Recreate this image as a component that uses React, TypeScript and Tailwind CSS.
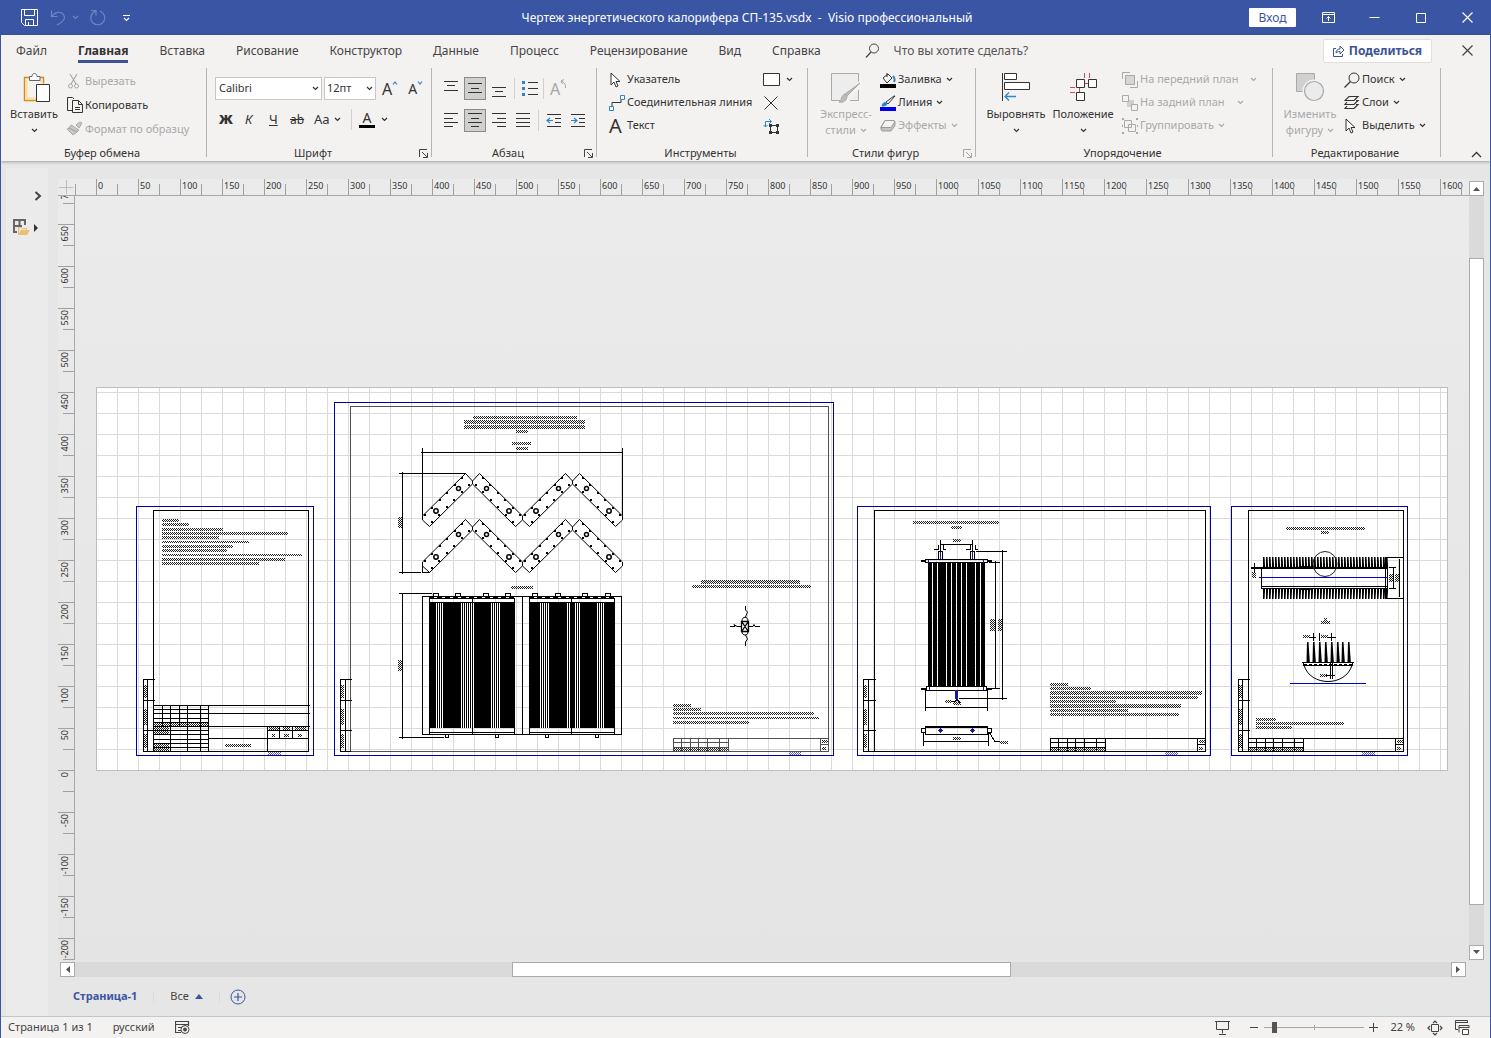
import { useState } from "react";
import type { ReactNode } from "react";

const tabs = [
  "Файл",
  "Главная",
  "Вставка",
  "Рисование",
  "Конструктор",
  "Данные",
  "Процесс",
  "Рецензирование",
  "Вид",
  "Справка",
];

const horizontalMarks = Array.from({ length: 33 }, (_, i) => i * 50);
const verticalMarks = Array.from({ length: 19 }, (_, i) => 700 - i * 50);

type SvgProps = { w: number; h: number; children: ReactNode; className?: string };

function Svg({ w, h, children, className = "" }: SvgProps) {
  return (
    <svg
      width={w}
      height={h}
      viewBox={`0 0 ${w} ${h}`}
      fill="none"
      stroke="currentColor"
      className={`shrink-0 ${className}`}
      aria-hidden="true"
    >
      {children}
    </svg>
  );
}

function Chevron({ className = "" }: { className?: string }) {
  return (
    <Svg w={7} h={5} className={className}>
      <path d="M1 1l2.5 2.5L6 1" strokeWidth="1.2" />
    </Svg>
  );
}

function Group({
  label,
  width,
  launcher,
  dim,
  children,
}: {
  label: string;
  width: string;
  launcher?: boolean;
  dim?: boolean;
  children: ReactNode;
}) {
  return (
    <section className={`flex flex-col shrink-0 h-[89px] border-r border-[#b5b5b5] ${width}`}>
      <div className="flex flex-1">{children}</div>
      <div className="flex items-center h-2 pr-[3px]">
        <span className="flex-1 text-center">{label}</span>
        {launcher && (
          <button aria-label={`${label}: параметры`} className={dim ? "text-[#a6a6a6]" : "text-[#444]"}>
            <Svg w={9} h={9}>
              <path d="M.5 8V.5H8M3 3l5 5M8.500 4v4.500H4" />
            </Svg>
          </button>
        )}
      </div>
    </section>
  );
}

function Row({
  icon,
  text,
  arrow,
  wide,
  disabled,
  tall,
}: {
  icon: ReactNode;
  text: string;
  arrow?: boolean;
  wide?: boolean;
  disabled?: boolean;
  tall?: boolean;
}) {
  return (
    <button
      disabled={disabled}
      className={`flex items-center whitespace-nowrap ${tall ? "h-6" : "h-[23px]"} ${
        disabled ? "text-[#a9a9a9]" : "text-[#333]"
      }`}
    >
      <span className="w-[18px] flex items-center">{icon}</span>
      {text}
      {arrow && <Chevron className={wide ? "ml-3" : "ml-1"} />}
    </button>
  );
}

function BigButton({
  icon,
  lines,
  disabled,
  width,
}: {
  icon: ReactNode;
  lines: string[];
  disabled?: boolean;
  width: string;
}) {
  return (
    <button
      disabled={disabled}
      className={`flex flex-col items-center shrink-0 pt-1 leading-4 ${width} ${
        disabled ? "text-[#a9a9a9]" : "text-[#333]"
      }`}
    >
      <span className="h-[34px]">{icon}</span>
      <span>{lines[0]}</span>
      <span className="flex items-center h-4 gap-1">
        {lines[1]}
        <Chevron />
      </span>
    </button>
  );
}

function AlignIcon({ d }: { d: string }) {
  return (
    <Svg w={16} h={16}>
      <path d={d} stroke="#333" shapeRendering="crispEdges" />
    </Svg>
  );
}

function ToolButton({
  label,
  active,
  children,
}: {
  label: string;
  active?: boolean;
  children: ReactNode;
}) {
  return (
    <button
      aria-label={label}
      aria-pressed={active}
      className={`w-[22px] h-[23px] flex items-center justify-center shrink-0 ${
        active ? "bg-[#d0d0ce] border border-[#8a8a8a]" : ""
      }`}
    >
      {children}
    </button>
  );
}

function Divider({ className = "" }: { className?: string }) {
  return <span className={`w-px h-[21px] bg-[#d2d0ce] shrink-0 ${className}`} />;
}

function Pointer() {
  return (
    <Svg w={13} h={16}>
      <path d="M2 1v12l3-3 2 5 2-1-2-4.500h4z" fill="#fff" stroke="#333" />
    </Svg>
  );
}

/* ---------- title bar ---------- */

function TitleBar() {
  return (
    <header className="flex items-center h-[35px] bg-[#3955a3] text-white shrink-0">
      <div className="flex items-center flex-1 pl-5">
        <button aria-label="Сохранить">
          <Svg w={17} h={17}>
            <path d="M.5.5h16v16h-13l-3-3zM3.500.5v6h10v-6M4.500 16.500v-6h8v6M7.500 13v3.500" />
          </Svg>
        </button>
        <button aria-label="Отменить" className="flex items-center ml-3 text-[#6f86c6]">
          <Svg w={17} h={17}>
            <path d="M1.500 1.500v6h6M2 7c3-4 8-5 11-2 4 5-1 8-6 11" strokeWidth="1.200" />
          </Svg>
          <Chevron className="ml-[5px]" />
        </button>
        <button aria-label="Вернуть" className="ml-[10px] text-[#6f86c6]">
          <Svg w={18} h={17}>
            <path d="M2 1.500h5v5M6.500 2C2 4 0 10 4 14c4 3 9 2 11-2 2-4 0-8-4-10" strokeWidth="1.200" />
          </Svg>
        </button>
        <button aria-label="Настройка панели" className="ml-[15px]">
          <Svg w={9} h={8}>
            <path d="M1 1.500h7M2 4l2.500 2.500L7 4" strokeWidth="1.200" />
          </Svg>
        </button>
      </div>
      <h1 className="whitespace-pre">
        Чертеж энергетического калорифера СП-135.vsdx  -  Visio профессиональный
      </h1>
      <div className="flex items-center justify-end flex-1 pr-[17px]">
        <button className="w-[47px] h-[19px] mr-[26px] bg-white text-[#3955a3] rounded-[1px]">Вход</button>
        <button aria-label="Параметры ленты" className="mr-[34px]">
          <Svg w={13} h={11}>
            <path d="M.5.5h12v10H.5zM.5 2.500h12M6.500 9V4.500M4.500 6.500l2-2 2 2" />
          </Svg>
        </button>
        <button aria-label="Свернуть" className="mr-[36px]">
          <Svg w={11} h={11}>
            <path d="M.5 5.500h10" />
          </Svg>
        </button>
        <button aria-label="Развернуть" className="mr-[36px]">
          <Svg w={10} h={10}>
            <path d="M.5.5h9v9h-9z" />
          </Svg>
        </button>
        <button aria-label="Закрыть">
          <Svg w={11} h={11}>
            <path d="M.5.5l10 10M10.500.5l-10 10" strokeWidth="1.200" />
          </Svg>
        </button>
      </div>
    </header>
  );
}

/* ---------- ribbon ---------- */

function TabRow() {
  const [active, setActive] = useState("Главная");
  return (
    <nav className="flex items-center h-[31px] pl-[15px] pr-[17px] text-[#444]">
      <div className="flex gap-[31px]">
        {tabs.map((tab) => (
          <button
            key={tab}
            onClick={() => setActive(tab)}
            className={`h-[25px] pt-[3px] border-b-[3px] ${
              tab === active ? "font-bold border-[#3b5393] text-[#333]" : "border-transparent"
            }`}
          >
            {tab}
          </button>
        ))}
      </div>
      <label className="flex items-center flex-1 ml-11">
        <Svg w={15} h={15}>
          <circle cx="9" cy="5.500" r="4.500" />
          <path d="M6 9l-5 5.500" strokeWidth="1.200" />
        </Svg>
        <input
          placeholder="Что вы хотите сделать?"
          aria-label="Поиск команд"
          className="flex-1 ml-[14px] outline-none placeholder:text-[#555]"
        />
      </label>
      <button className="flex items-center justify-center w-[109px] h-6 gap-1 bg-white border border-[#e1dfdd] rounded-[2px] font-bold text-[#3b5393]">
        <Svg w={12} h={12}>
          <path d="M3 3.500H.5v8h9V9M3 8c0-3 2-4 4-4V1l4 4-4 4V6.500C5 6.500 4 7 3 8z" />
        </Svg>
        Поделиться
      </button>
      <button aria-label="Закрыть документ" className="ml-[30px]">
        <Svg w={11} h={11}>
          <path d="M.5.5l10 10M10.500.5l-10 10" strokeWidth="1.200" />
        </Svg>
      </button>
    </nav>
  );
}

function ClipboardGroup() {
  return (
    <Group label="Буфер обмена" width="w-[206px]">
      <BigButton
        width="w-[66px]"
        lines={["Вставить"]}
        icon={
          <Svg w={32} h={32} className="ml-[6px]">
            <path d="M9 5.500H3.500v23h13M18 5.500h4.500v6" stroke="#d8891c" strokeWidth="1.400" />
            <path d="M5.500 8v18.500h11M20.500 8v3" stroke="#fbdca0" strokeWidth="2" />
            <path d="M8.500 8.500V4.500H11c0-4 5-4 5 0h3v4z" fill="#fff" stroke="#666" />
            <path d="M15.500 12.500h13v17h-13z" fill="#fff" stroke="#333" />
          </Svg>
        }
      />
      <div className="pt-px">
        <Row
          tall
          disabled
          text="Вырезать"
          icon={
            <Svg w={14} h={16}>
              <path d="M3 1l6 10M10 1L4 11" strokeWidth="1.200" />
              <circle cx="3.500" cy="13" r="2" />
              <circle cx="9.500" cy="13" r="2" />
            </Svg>
          }
        />
        <Row
          tall
          text="Копировать"
          icon={
            <Svg w={16} h={16}>
              <path d="M5 13.500H.5V.5h5L7 2M5.500 3.500h6l4 4v8h-10zM11.500 3.500v4h4M8 10.500h5M8 12.500h5" />
            </Svg>
          }
        />
        <Row
          tall
          disabled
          text="Формат по образцу"
          icon={
            <Svg w={16} h={16}>
              <path d="M9 4l4-3 2 1-3 5zM4 4l8 5-2 2-8-4zM2 7l-2 1 6 6 4-3z" fill="#c8c8c8" />
            </Svg>
          }
        />
      </div>
    </Group>
  );
}

function FontGroup() {
  return (
    <Group label="Шрифт" width="w-[225px]" launcher>
      <div className="flex flex-col pl-2 pt-[9px] gap-[9px]">
        <div className="flex items-center gap-[2px]">
          <div className="relative flex items-center">
            <select
              aria-label="Шрифт текста"
              className="w-[107px] h-[23px] pl-[3px] appearance-none bg-white border border-[#c8c6c4]"
            >
              <option>Calibri</option>
            </select>
            <Chevron className="absolute right-[3px] pointer-events-none" />
          </div>
          <div className="relative flex items-center">
            <select
              aria-label="Размер шрифта"
              className="w-[52px] h-[23px] pl-[2px] appearance-none bg-white border border-[#c8c6c4]"
            >
              <option>12пт</option>
            </select>
            <Chevron className="absolute right-[3px] pointer-events-none" />
          </div>
          <button aria-label="Увеличить размер" className="flex items-start ml-1 text-base leading-4">
            A
            <Svg w={6} h={4} className="text-[#2a86b8]">
              <path d="M1 3.500L3 1l2 2.500" strokeWidth="1.200" />
            </Svg>
          </button>
          <button aria-label="Уменьшить размер" className="flex items-start ml-2 text-sm leading-4">
            A
            <Svg w={6} h={4} className="text-[#2a86b8]">
              <path d="M1 .5L3 3 5 .5" strokeWidth="1.200" />
            </Svg>
          </button>
        </div>
        <div className="flex items-center h-[21px] text-[13px] pl-1">
          <button className="w-[26px] text-left font-black">Ж</button>
          <button className="w-6 text-left italic">К</button>
          <button className="w-[21px] text-left underline">Ч</button>
          <button className="w-6 text-left line-through text-xs">ab</button>
          <button className="flex items-center w-[37px] gap-1">
            Aa
            <Chevron />
          </button>
          <Divider />
          <button aria-label="Цвет текста" className="flex items-center ml-[7px] gap-[6px]">
            <span className="w-4 h-4 text-sm leading-[12px] border-b-[3px] border-black">A</span>
            <Chevron />
          </button>
        </div>
      </div>
    </Group>
  );
}

function ParagraphGroup() {
  return (
    <Group label="Абзац" width="w-[165px]" launcher>
      <div className="flex flex-col pl-[8px] pt-[9px] gap-[9px]">
        <div className="flex items-center gap-[2px]">
          <ToolButton label="По верхнему краю">
            <AlignIcon d="M1 .5h14M4 4.500h8M1 9.500h14" />
          </ToolButton>
          <ToolButton label="По середине" active>
            <AlignIcon d="M1 2.500h14M4 7.500h8M1 11.500h14" />
          </ToolButton>
          <ToolButton label="По нижнему краю">
            <AlignIcon d="M1 6.500h14M4 10.500h8M1 15.500h14" />
          </ToolButton>
          <Divider className="mx-[2px]" />
          <ToolButton label="Маркеры">
            <Svg w={16} h={16}>
              <path d="M6 1.500h10M6 7.500h10M6 13.500h10" stroke="#333" />
              <path d="M0 1.500h3M0 7.500h3M0 13.500h3" stroke="#2a86c8" strokeWidth="3" />
            </Svg>
          </ToolButton>
          <Divider />
          <button aria-label="Повернуть текст" className="flex items-start ml-1 text-base leading-5 text-[#a6a6a6]">
            A
            <Svg w={7} h={10}>
              <path d="M5.500 9C6 5 4 3 1 2M4 .5L1 2l1.500 3" />
            </Svg>
          </button>
        </div>
        <div className="flex items-center gap-[2px]">
          <ToolButton label="По левому краю">
            <AlignIcon d="M1 .5h14M1 5.500h9M1 9.500h14M1 13.500h9" />
          </ToolButton>
          <ToolButton label="По центру" active>
            <AlignIcon d="M1 .5h14M4 5.500h8M1 9.500h14M4 13.500h8" />
          </ToolButton>
          <ToolButton label="По правому краю">
            <AlignIcon d="M1 .5h14M6 5.500h9M1 9.500h14M6 13.500h9" />
          </ToolButton>
          <ToolButton label="По ширине">
            <AlignIcon d="M1 .5h14M1 5.500h14M1 9.500h14M1 13.500h14" />
          </ToolButton>
          <Divider className="mx-[2px]" />
          <ToolButton label="Уменьшить отступ">
            <Svg w={16} h={16}>
              <path d="M1 1.500h14M9 5.500h6M9 9.500h6M1 13.500h14" stroke="#333" />
              <path d="M7 7.500H1M4 5L1 7.500 4 10" stroke="#2a86c8" strokeWidth="1.200" />
            </Svg>
          </ToolButton>
          <ToolButton label="Увеличить отступ">
            <Svg w={16} h={16}>
              <path d="M1 1.500h14M9 5.500h6M9 9.500h6M1 13.500h14" stroke="#333" />
              <path d="M1 7.500h6M4 5l3 2.500L4 10" stroke="#2a86c8" strokeWidth="1.200" />
            </Svg>
          </ToolButton>
        </div>
      </div>
    </Group>
  );
}

function ToolsGroup() {
  return (
    <Group label="Инструменты" width="w-[211px]">
      <div className="flex justify-between w-full pl-3 pr-[13px]">
        <div>
          <Row text="Указатель" icon={<Pointer />} />
          <Row
            text="Соединительная линия"
            icon={
              <Svg w={16} h={16}>
                <path d="M3 11V7.500h9V5" stroke="#333" />
                <path d="M.5 11.500h4v4h-4zM11.500.5h4v4h-4z" fill="#fff" stroke="#2a86c8" />
              </Svg>
            }
          />
          <Row text="Текст" icon={<span className="text-xl leading-5 text-[#333]">A</span>} />
        </div>
        <div className="w-[31px]">
          <button aria-label="Прямоугольник" className="flex items-center h-[23px] gap-[6px]">
            <Svg w={17} h={13}>
              <path d="M.5.5h16v12H.5z" fill="#fff" stroke="#333" />
            </Svg>
            <Chevron />
          </button>
          <button aria-label="Точка соединения" className="flex items-center h-[23px] pl-px">
            <Svg w={14} h={14}>
              <path d="M.5.5l13 13M13.500.5l-13 13" stroke="#333" />
            </Svg>
          </button>
          <button aria-label="Текстовый блок" className="flex items-center h-[23px]">
            <Svg w={17} h={16}>
              <path d="M2.500 9V3.500H8M.5 7l2 2 2-2M6 1l2.500 2.500L6 6" stroke="#2a86c8" />
              <path d="M7.500 7.500h7v7h-7z" stroke="#333" />
              <path d="M6 7.500h3M13 7.500h3M6 14.500h3M13 14.500h3" stroke="#333" strokeWidth="3" />
            </Svg>
          </button>
        </div>
      </div>
    </Group>
  );
}

function StylesGroup() {
  return (
    <Group label="Стили фигур" width="w-[168px]" launcher dim>
      <BigButton
        disabled
        width="w-[72px] pl-1"
        lines={["Экспресс-", "стили"]}
        icon={
          <Svg w={32} h={32}>
            <path d="M10 28.500H1.500v-27h27v8M28.500 18v10.500H20" fill="#ededed" />
            <path d="M30 11L17 24l-2-2zM17 24c0 5-4 7-8 6 2-1 2-3 3-5 1-2 2-3 3-3z" fill="#bbb" />
          </Svg>
        }
      />
      <div>
        <Row
          arrow
          text="Заливка"
          icon={
            <Svg w={16} h={16}>
              <path d="M3 6l5-4 4 4-5 5zM7 1v4" stroke="#333" />
              <path d="M13 4c2 2 2 4 1 6" stroke="#2a86c8" strokeWidth="2" />
              <path d="M0 14h16" stroke="#000" strokeWidth="4" />
            </Svg>
          }
        />
        <Row
          arrow
          text="Линия"
          icon={
            <Svg w={16} h={16}>
              <path d="M15 1L8 9 6 7l8-6z" fill="#fff" stroke="#333" />
              <path d="M2 11c1-4 3-4 5-3 0 3-3 3-5 3z" fill="#2a86c8" stroke="#2a86c8" />
              <path d="M0 14h16" stroke="#0000f0" strokeWidth="4" />
            </Svg>
          }
        />
        <Row
          arrow
          disabled
          text="Эффекты"
          icon={
            <Svg w={16} h={16}>
              <path d="M5 2.500h8q2 0 2 2v3l-4 5.500H3q-2 0-2-2V9z" fill="#c4c4c4" stroke="#999" />
              <path d="M5 2.500h8l2 1-4 6H1z" fill="#f2f2f2" stroke="#999" />
            </Svg>
          }
        />
      </div>
    </Group>
  );
}

function ArrangeGroup() {
  return (
    <Group label="Упорядочение" width="w-[297px]">
      <BigButton
        width="w-[74px] pl-[6px]"
        lines={["Выровнять"]}
        icon={
          <Svg w={30} h={30} className="text-[#333]">
            <path d="M1.500 1v28" />
            <path d="M3.500 1.500h12v6h-12zM3.500 10.500h25v7h-25z" fill="#fff" />
            <path d="M15 24.500H4M8 20.500l-4 4 4 4" stroke="#2a86c8" strokeWidth="1.300" />
          </Svg>
        }
      />
      <BigButton
        width="w-[66px]"
        lines={["Положение"]}
        icon={
          <Svg w={30} h={30} className="text-[#333]">
            <path d="M16.500 1v5M21.500 1v5M2 15.500h5M2 20.500h5M16.500 11.500h5M11.500 16v5" stroke="#d64550" />
            <path d="M8.500 7.500h8v8h-8zM20.500 7.500h8v8h-8zM8.500 20.500h8v8h-8z" fill="#fff" />
          </Svg>
        }
      />
      <div className="pl-[6px]">
        <Row
          arrow
          wide
          disabled
          text="На передний план"
          icon={
            <Svg w={16} h={16}>
              <path d="M.5 7V.5H8M8 15.500h7.500V9" />
              <path d="M3.500 3.500h9v9h-9z" fill="#d6d6d6" />
            </Svg>
          }
        />
        <Row
          arrow
          wide
          disabled
          text="На задний план"
          icon={
            <Svg w={16} h={16}>
              <path d="M5 5h7v7H5z" fill="#d0d0d0" stroke="none" />
              <path d="M.5.5h6v6h-6zM9.500 9.500h6v6h-6z" fill="#f3f2f1" />
            </Svg>
          }
        />
        <Row
          arrow
          disabled
          text="Группировать"
          icon={
            <Svg w={16} h={16}>
              <path d="M2.500 2.500h7v7h-7zM6.500 6.500h7v7h-7z" />
              <path d="M0 1h2M14 1h2M0 15h2M14 15h2M0 8h1M15 8h1" strokeWidth="2" />
            </Svg>
          }
        />
      </div>
    </Group>
  );
}

function EditGroup() {
  return (
    <Group label="Редактирование" width="w-[168px]">
      <BigButton
        disabled
        width="w-[71px] pl-[3px]"
        lines={["Изменить", "фигуру"]}
        icon={
          <Svg w={30} h={30}>
            <path d="M1.500 1.500h18v18h-18z" fill="#d0d0d0" />
            <circle cx="19" cy="19" r="10.500" fill="#ebebeb" stroke="#f3f2f1" strokeWidth="2" />
            <circle cx="19" cy="19" r="9.500" fill="#ebebeb" strokeWidth="1.200" />
          </Svg>
        }
      />
      <div>
        <Row
          arrow
          text="Поиск"
          icon={
            <Svg w={16} h={16}>
              <circle cx="10" cy="6" r="5" />
              <path d="M6.500 9.500L.5 15.500" strokeWidth="1.300" />
            </Svg>
          }
        />
        <Row
          arrow
          text="Слои"
          icon={
            <Svg w={16} h={16}>
              <path d="M5 1.500h9l-4 4H1zM3 7l-2 2.500h9l4-4h-2M3 11l-2 2.500h9l4-4h-2" strokeWidth="1.200" />
            </Svg>
          }
        />
        <Row arrow text="Выделить" icon={<Pointer />} />
      </div>
    </Group>
  );
}

function Ribbon() {
  return (
    <div className="shrink-0 bg-[#f3f2f1] shadow-[0_1px_3px_rgba(0,0,0,0.3)] relative">
      <TabRow />
      <div className="flex h-[95px] pt-[2px] overflow-hidden text-[11px]">
        <ClipboardGroup />
        <FontGroup />
        <ParagraphGroup />
        <ToolsGroup />
        <StylesGroup />
        <ArrangeGroup />
        <EditGroup />
        <button aria-label="Свернуть ленту" className="self-end ml-auto pr-2 pb-[3px]">
          <Svg w={11} h={7}>
            <path d="M1 6l4.500-4.500L10 6" strokeWidth="1.300" />
          </Svg>
        </button>
      </div>
    </div>
  );
}

/* ---------- drawing ---------- */

type Bar = [x: number, y: number, w: number, h: number];

function Hatch({ bars, blue }: { bars: Bar[]; blue?: boolean }) {
  return (
    <g fill={blue ? "url(#hatchBlue)" : "url(#hatch)"} stroke="none">
      {bars.map(([x, y, w, h]) => (
        <rect key={`${x}-${y}`} x={x} y={y} width={w} height={h} />
      ))}
    </g>
  );
}

function Frame({
  x,
  y,
  right,
  innerX,
  stripX,
  stripMid,
  inset = 5,
  gray,
}: {
  x: number;
  y: number;
  right: number;
  innerX: number;
  stripX: number;
  stripMid: number;
  inset?: number;
  gray?: boolean;
}) {
  return (
    <>
      <path d={`M${x} ${y}H${right}V755.500H${x}z`} stroke="#0000a0" />
      <path
        d={`M${innerX} ${y + 4}H${right - inset}V751.500H${innerX}z`}
        stroke={gray ? "#505050" : "#000"}
      />
      <path
        d={`M${innerX + 1} 679.500H${stripX}V751.500H${innerX}M${stripMid} 679V751M${stripX} 700.500H${innerX + 1}M${stripX} 730.500H${innerX + 1}`}
      />
      <Hatch
        bars={[
          [stripX + 0.5, 685, 3, 13],
          [stripX + 0.5, 709, 3, 16],
          [stripX + 0.5, 734, 3, 14],
        ]}
      />
    </>
  );
}

// small title block in the lower corner of a sheet
function Stamp({ x, right, gray }: { x: number; right: number; gray?: boolean }) {
  const columns = [8, 17, 25, 34, 46, 55];
  return (
    <g stroke={gray ? "#505050" : "#000"}>
      <path
        d={`M${x} 751V738.500H${right}M${x} 742.500h55M${x} 747.500h55M${right - 8} 738V751M${right - 8} 744.500H${right}`}
      />
      <path d={columns.map((c) => `M${x + c} 738V751`).join("")} />
      <Hatch
        bars={[
          [x + 0.5, 748, 54, 3],
          [right - 6.5, 740, 6, 3],
          [right - 6.5, 747, 4, 3],
        ]}
      />
    </g>
  );
}

function NotesSheet() {
  return (
    <g>
      <Frame x={136.5} y={506.5} right={313.5} innerX={153.5} stripX={143.5} stripMid={147.5} />
      <Hatch
        bars={[
          [162, 519, 17, 3],
          [162, 523, 27, 3],
          [162, 528, 61, 3],
          [162, 532, 126, 3],
          [162, 536, 57, 3],
          [162, 541, 87, 2],
          [162, 545, 71, 3],
          [162, 549, 65, 3],
          [162, 554, 140, 2],
          [162, 558, 123, 3],
          [162, 562, 97, 3],
          [154, 722, 54, 4],
          [154, 727, 15, 7],
          [154, 743, 15, 8],
          [225, 744, 26, 3],
          [269, 727, 10, 3],
          [283, 727, 7, 3],
          [295, 727, 11, 3],
          [272, 734, 3, 3],
          [284, 734, 5, 3],
          [298, 734, 4, 3],
        ]}
      />
      <path d="M153 705.500H310M208 713.500H310M208 726.500H310M208 738.500H268M267 730.500H309M267.500 726V751M279.500 726V738M292.500 726V738M267 738.500H309" />
      <path
        d={[709, 713, 718, 722, 726, 730, 734, 739, 743, 747].map((y) => `M153 ${y + 0.5}H209`).join("")}
      />
      <path d="M162.500 705V726M179.500 705V726M170.500 705V751M187.500 705V751M200.500 705V751M208.500 705V751" />
      <Hatch blue bars={[[268, 752, 13, 3]]} />
    </g>
  );
}

function Beam() {
  const steps = [0, 1, 2, 3, 4, 5];
  return (
    <g>
      <path
        d="M422.500 516L465.500 473.500L472.500 481V484L429.500 526.500L422.500 520z"
        fill="#fff"
        shapeRendering="auto"
      />
      {steps.map((i) => (
        <g key={i} fill="#000" stroke="none">
          <rect x={Math.round(461 - 7.4 * i)} y={Math.round(477 + 7.4 * i)} width="2" height="2" />
          <rect x={Math.round(468 - 7.4 * i)} y={Math.round(484 + 7.4 * i)} width="2" height="2" />
        </g>
      ))}
      <circle cx="458.500" cy="488.500" r="2" strokeWidth="1.500" shapeRendering="auto" />
      <circle cx="436" cy="511" r="2.200" strokeWidth="1.500" shapeRendering="auto" />
    </g>
  );
}

function Panel({ x, right, mid, slots }: { x: number; right: number; mid: number; slots: number[] }) {
  return (
    <>
      <path d={`M${x}.5 598V734M${right - 0.5} 598V734M${x} 598.500H${right}M${x} 732.500H${right}`} />
      <path d={`M${x} 602H${right}V728H${x}z`} fill="#000" stroke="none" />
      <path d={slots.map((s) => `M${s}.5 603V728`).join("")} stroke="#fff" />
      <path d={`M${mid}.5 597V603M${mid}.5 728V734`} />
    </>
  );
}

function GeneralSheet() {
  const knobs = [436, 458, 486, 508, 535, 558, 585, 608];
  return (
    <g>
      <Frame x={334.5} y={402.5} right={833.5} innerX={350.5} stripX={340.5} stripMid={345.5} gray />
      <Hatch
        bars={[
          [473, 416, 104, 3],
          [464, 420, 121, 4],
          [464, 425, 121, 4],
          [516, 430, 12, 3],
          [512, 442, 19, 3],
          [516, 447, 12, 3],
          [398, 517, 4, 11],
          [511, 586, 22, 3],
          [398, 660, 4, 11],
          [701, 580, 99, 4],
          [692, 585, 119, 3],
          [673, 704, 18, 3],
          [673, 708, 28, 3],
          [673, 712, 141, 3],
          [673, 717, 146, 2],
          [673, 721, 76, 3],
        ]}
      />
      <path d="M421 452.500H623M422.500 448V520M622.500 448V520M402.500 472V574M399 473.500H466M399 572.500H421M422.500 562V572.500H430" />
      {[0, 46].map((dy) => (
        <g key={dy} transform={`translate(0 ${dy})`}>
          {[0, 100].map((dx) => (
            <g key={dx} transform={`translate(${dx} 0)`}>
              <Beam />
              <g transform="translate(945 0) scale(-1 1)">
                <Beam />
              </g>
            </g>
          ))}
        </g>
      ))}

      <path d="M399 593.500H432M402.500 593V739M399 737.500H444M422.500 596.500H621.500V734.500H422.500zM522.500 597V734" />
      <Panel
        x={429}
        right={515}
        mid={472}
        slots={[436, 438, 440, 442, 461, 463, 465, 467, 469, 471, 473, 491, 493, 495, 497, 499]}
      />
      <Panel
        x={529}
        right={615}
        mid={571}
        slots={[540, 542, 544, 546, 548, 567, 569, 575, 577, 579, 597, 599, 601, 603]}
      />
      <path d="M429 597.500H515M529 597.500H615" strokeDasharray="5 3" />
      <g fill="#fff">
        {knobs.map((k) => (
          <rect key={k} x={k - 2.5} y="593.500" width="5" height="3" />
        ))}
        {[447, 497, 547, 597].map((k) => (
          <rect key={k} x={k - 1.5} y="734.500" width="3" height="3" />
        ))}
      </g>

      {/* fan symbol */}
      <g shapeRendering="auto">
        <path d="M741.500 621.500h7v10h-7zM742 622l6 9M748 622l-6 9" strokeWidth="1.300" />
        <path d="M742 621c0-5 6-5 6 0M742 632c0 4 6 4 6 0M745.500 606v4l2 2-2 5M745.500 646v-4l2-3-2-4" />
        <path d="M730 626.500h5l-1-2 3 2h4M749 626.500h4l1-2 1 2h5" />
      </g>
      <Stamp x={673.5} right={828.5} gray />
      <Hatch blue bars={[[789, 752, 12, 3]]} />
    </g>
  );
}

function SectionSheet() {
  const tubes = Array.from({ length: 12 }, (_, i) => 928 + Math.round(i * 4.82));
  return (
    <g>
      <Frame x={857.5} y={506.5} right={1210.5} innerX={874.5} stripX={863.5} stripMid={868.5} />
      <Hatch
        bars={[
          [913, 521, 86, 3],
          [951, 526, 11, 3],
          [953, 539, 8, 3],
          [990, 619, 5, 12],
          [998, 619, 4, 12],
          [945, 700, 6, 3],
          [953, 702, 8, 3],
          [953, 737, 8, 3],
          [1000, 741, 8, 3],
          [1050, 683, 18, 3],
          [1050, 687, 41, 3],
          [1050, 691, 152, 4],
          [1050, 696, 148, 3],
          [1050, 700, 66, 3],
          [1050, 704, 131, 4],
          [1050, 709, 78, 3],
          [1050, 713, 129, 3],
        ]}
      />
      <path d="M940 544.500H973M940.500 540V559M972.500 540V559M934 549.500H938V545M943 545V549.500H946M966 549.500H970V545M975 545V549.500H978" />
      <path d="M938.500 551.500h4v8h-4zM970.500 551.500h4v8h-4z" />
      <path d="M925.500 559.500h62v3h-62zM926.500 686.500h60v4h-60z" />
      <path d="M921 561H926M987 561H992M921 689H926M987 689H992" strokeWidth="2" />
      <g fill="#000" stroke="none">
        {tubes.map((x) => (
          <rect key={x} x={x} y="563" width="4" height="124" />
        ))}
      </g>
      <path d="M976 551.500H1007M989 562.500H1000M989 688.500H1000M959 698.500H1007M995.500 561V689M1002.500 550V700" />
      <path d="M925.500 690V711M987.500 690V711M925 707.500H988M951 701.500h4l2-2 3 3" />
      <path d="M925.500 727.500h62v7h-62zM921.500 728.500h4v4h-4zM987.500 728.500h4v4h-4z" />
      <path d="M925 727H988" strokeWidth="2" />
      <path d="M923.500 732V746M988.500 732V746M923 741.500H989M989 732L995 741.500H1000" />
      <g fill="#1818a0" stroke="#1818a0">
        <path d="M955.500 690.500h2v8h-2zM940.500 552V559M972.500 552V559" />
        <circle cx="940.500" cy="730.500" r="1.500" />
        <circle cx="972.500" cy="730.500" r="1.500" />
        <path d="M938 730.500h5M940.500 728v5M970 730.500h5M972.500 728v5M928.500 560v3M983.500 560v3M929 687v3M983 687v3" />
      </g>
      <Stamp x={1050.5} right={1205.5} />
      <Hatch blue bars={[[1165, 752, 13, 3]]} />
    </g>
  );
}

function TubeSheet() {
  const fins = Array.from({ length: 42 }, (_, i) => 1263 + i * 3);
  const spikes = Array.from({ length: 8 }, (_, i) => 1307 + Math.round(i * 5.9));
  return (
    <g>
      <Frame
        x={1231.5}
        y={506.5}
        right={1407.5}
        innerX={1248.5}
        stripX={1238.5}
        stripMid={1242.5}
        inset={4}
      />
      <Hatch
        bars={[
          [1286, 527, 79, 3],
          [1321, 531, 8, 3],
          [1252, 572, 4, 6],
          [1389, 574, 4, 8],
          [1395, 574, 4, 8],
          [1324, 618, 3, 3],
          [1321, 621, 9, 3],
          [1303, 635, 7, 3],
          [1321, 635, 7, 3],
          [1320, 674, 7, 3],
          [1256, 718, 20, 3],
          [1256, 722, 88, 3],
          [1256, 726, 36, 3],
        ]}
      />
      <g fill="#000" stroke="none" shapeRendering="auto">
        {fins.map((x) => (
          <path key={x} d={`M${x} 557h1.500l.7 11h-2.200zM${x} 588h2.200l-.7 11h-1.500z`} />
        ))}
        <path d="M1296 568l4-2h10l4 2zM1296 588l4 2h10l4-2z" />
        {spikes.map((x) => (
          <path key={x} d={`M${x} 642h1.500l1.300 20h-3.300z`} />
        ))}
      </g>
      <path d="M1251 568H1388" strokeWidth="2" />
      <path d="M1261.500 568V588.500H1387.500V568M1261 586.500H1387M1254.500 563V573" />
      <path d="M1403 557.500H1385.500V598.500H1403M1399.500 559V597M1393.500 567V588M1389 567.500H1396M1389 588.500H1396" />
      <path d="M1259 577.500H1388M1290 683.500H1366" stroke="#0000c8" />
      <g shapeRendering="auto">
        <ellipse cx="1325" cy="564" rx="12" ry="12.500" stroke="#222" />
        <path d="M1304 665C1310 687 1346 687 1352 665" />
      </g>
      <path d="M1303 662.500h50l-1 3h-48z" fill="#fff" />
      <path d="M1304 664H1352" strokeDasharray="3 2" />
      <path d="M1309 637.500H1316M1327 637.500H1336M1313.500 633V641M1319.500 633V641M1331 633V641M1326 675.500H1335M1330.500 662V679M1332.500 662V679" />
      <Stamp x={1248.5} right={1403.5} />
      <Hatch blue bars={[[1362, 752, 13, 3]]} />
    </g>
  );
}

function Drawing() {
  return (
    <svg
      width={1352}
      height={384}
      viewBox="96 387 1352 384"
      fill="none"
      stroke="#000"
      shapeRendering="crispEdges"
      className="block ml-[21px] mt-[191px] max-w-none shrink-0"
      role="img"
      aria-label="Чертеж калорифера"
    >
      <defs>
        <pattern id="grid" x="96" y="392" width="21" height="21" patternUnits="userSpaceOnUse">
          <path d="M0 .5H21M.5 0V21" stroke="#dadada" />
        </pattern>
        <pattern id="hatch" width="2" height="2" patternUnits="userSpaceOnUse">
          <path d="M0 0h1v1H0zM1 1h1v1H1z" fill="#222" stroke="none" />
        </pattern>
        <pattern id="hatchBlue" width="2" height="2" patternUnits="userSpaceOnUse">
          <path d="M0 0h1v1H0zM1 1h1v1H1z" fill="#5a5ab0" stroke="none" />
        </pattern>
      </defs>
      <rect x="96" y="387" width="1352" height="384" fill="#fff" stroke="none" />
      <rect x="96" y="387" width="1352" height="384" fill="url(#grid)" stroke="none" />
      <rect x="96.500" y="387.500" width="1351" height="383" stroke="#bdbdbd" />
      <NotesSheet />
      <GeneralSheet />
      <SectionSheet />
      <TubeSheet />
    </svg>
  );
}

/* ---------- workspace ---------- */

function ScrollButton({ label, d }: { label: string; d: string }) {
  return (
    <button
      aria-label={label}
      className="flex items-center justify-center w-[15px] h-[15px] shrink-0 bg-white border border-[#ababab]"
    >
      <Svg w={7} h={7}>
        <path d={d} fill="#555" stroke="none" />
      </Svg>
    </button>
  );
}

function HorizontalRuler() {
  return (
    <div className="flex flex-1 min-w-0 h-[17px] overflow-hidden border-b border-[#a8a8a8] text-[9px] leading-[13px] text-[#333]">
      <span className="w-[21px] h-[11px] self-end border-l border-[#a0a0a0] shrink-0" />
      {horizontalMarks.map((n) => (
        <div key={n} className="flex items-end w-[42px] h-full shrink-0">
          <span className="w-[21px] h-full pl-px border-l border-[#a0a0a0]">{n}</span>
          <span className="w-[21px] h-[11px] border-l border-[#a0a0a0]" />
        </div>
      ))}
    </div>
  );
}

function VerticalRuler() {
  return (
    <div className="w-[17px] shrink-0 overflow-hidden border-r border-[#a8a8a8] text-[9px] leading-[13px] text-[#333]">
      <div className="-mt-[14px]">
        {verticalMarks.map((n) => (
          <div key={n} className="flex flex-col items-end h-[42px]">
            <div className="flex items-start w-full h-[21px] pt-px border-t border-[#a0a0a0]">
              <span className="rotate-180 [writing-mode:vertical-rl]">{n}</span>
            </div>
            <span className="w-[11px] h-[21px] border-t border-[#a0a0a0]" />
          </div>
        ))}
      </div>
    </div>
  );
}

function SidePanel() {
  return (
    <aside className="flex w-[57px] shrink-0 pl-[5px] pr-[10px] pt-[7px]">
      <div className="flex flex-col items-end flex-1 pt-[23px] pr-[6px] gap-[18px] bg-[#ebebeb] text-[#444]">
        <button aria-label="Развернуть окно фигур">
          <Svg w={8} h={10}>
            <path d="M1.500 1L6 5 1.500 9" strokeWidth="2" />
          </Svg>
        </button>
        <button aria-label="Фигуры" className="flex items-center gap-1 pr-1">
          <Svg w={17} h={17}>
            <path d="M1 14V1h11v5M1 7h8M6.500 1v6M1 13h3" stroke="#666" strokeWidth="2" />
            <path d="M5.500 15V8.500h3l1 1h4V11" fill="#f6e3bd" stroke="#e3bd77" />
            <path d="M5 16l3-5h9l-3 5z" fill="#e8bf76" stroke="none" />
          </Svg>
          <Svg w={4} h={8}>
            <path d="M0 0l4 4-4 4z" fill="#333" stroke="none" />
          </Svg>
        </button>
      </div>
    </aside>
  );
}

function PageTabs() {
  return (
    <div className="flex items-center h-[39px] pl-[15px] shrink-0 text-[11px] text-[#444]">
      <button className="font-bold text-[#3b55a0]">Страница-1</button>
      <span className="w-px h-3 mx-4 bg-[#dadada]" />
      <button className="flex items-center gap-[6px]">
        Все
        <Svg w={8} h={5}>
          <path d="M0 5l4-5 4 5z" fill="#3b55a0" stroke="none" />
        </Svg>
      </button>
      <span className="w-px h-3 ml-4 mr-[10px] bg-[#dadada]" />
      <button aria-label="Добавить страницу" className="text-[#3b55a0]">
        <Svg w={16} h={16}>
          <circle cx="8" cy="8" r="7" />
          <path d="M8 4v8M4 8h8" strokeWidth="1.200" />
        </Svg>
      </button>
    </div>
  );
}

function Workspace() {
  return (
    <main className="flex flex-1 min-h-0">
      <SidePanel />
      <div className="flex flex-col flex-1 min-w-0 pt-[18px]">
        <div className="flex flex-1 min-h-0">
          <div className="flex flex-col flex-1 min-w-0 bg-linear-to-b from-[#ebebeb] to-[#e4e4e4]">
            <div className="flex shrink-0">
              <Svg w={17} h={17} className="text-[#bdbdbd]">
                <path d="M1 8.500h14M8.500 1v14" />
                <path d="M0 16.500h17" stroke="#a8a8a8" />
              </Svg>
              <HorizontalRuler />
            </div>
            <div className="flex flex-1 min-h-0">
              <VerticalRuler />
              <div className="flex flex-1 min-w-0 items-start overflow-hidden">
                <Drawing />
              </div>
            </div>
          </div>
          <div className="flex flex-col w-[15px] mt-[2px] mr-[6px] shrink-0 bg-[#dadada]">
            <ScrollButton label="Вверх" d="M0 6l3.500-4L7 6z" />
            <div className="flex flex-col flex-1">
              <span className="grow-[62]" />
              <span className="grow-[646] bg-white border border-[#ababab]" />
              <span className="grow-[40]" />
            </div>
            <ScrollButton label="Вниз" d="M0 1l3.500 4L7 1z" />
          </div>
        </div>
        <div className="flex h-[15px] mt-[2px] ml-[2px] mr-6 shrink-0 bg-[#dadada]">
          <ScrollButton label="Влево" d="M6 0L2 3.500 6 7z" />
          <div className="flex flex-1">
            <span className="grow-[438]" />
            <span className="grow-[498] bg-white border border-[#ababab]" />
            <span className="grow-[441]" />
          </div>
          <ScrollButton label="Вправо" d="M1 0l4 3.500L1 7z" />
        </div>
        <PageTabs />
      </div>
    </main>
  );
}

function StatusBar() {
  const [zoom, setZoom] = useState(8);
  return (
    <footer className="flex items-center h-[22px] pl-[7px] pr-5 shrink-0 bg-[#f3f2f1] border-t border-[#c6c6c6] text-[11px] text-[#444]">
      <span>Страница 1 из 1</span>
      <span className="ml-5">русский</span>
      <button aria-label="Запись макроса" className="ml-5">
        <Svg w={15} h={13}>
          <path d="M6 11.500H.5v-11h13V5M.5 3.500h13M3 6.500h4M3 9.500h3" strokeWidth="1.200" />
          <circle cx="10" cy="8.500" r="4" />
          <circle cx="10" cy="8.500" r="1.500" fill="currentColor" />
        </Svg>
      </button>
      <div className="flex items-center ml-auto">
        <button aria-label="Режим презентации" className="mr-5">
          <Svg w={15} h={15}>
            <path d="M0 1.500h15M1.500 1.500v8h12v-8M7.500 9.500v4M4 14.500h7" />
          </Svg>
        </button>
        <button aria-label="Уменьшить">
          <Svg w={9} h={9}>
            <path d="M0 4.500h8" />
          </Svg>
        </button>
        <div className="relative flex items-center w-[100px] mx-[5px]">
          <span className="absolute left-1/2 w-px h-[5px] bg-[#a6a6a6]" />
          <input
            type="range"
            aria-label="Масштаб"
            value={zoom}
            onChange={(e) => setZoom(Number(e.target.value))}
            className="w-full h-px appearance-none bg-[#a6a6a6] [&::-webkit-slider-thumb]:appearance-none [&::-webkit-slider-thumb]:w-[5px] [&::-webkit-slider-thumb]:h-[11px] [&::-webkit-slider-thumb]:bg-[#555]"
          />
        </div>
        <button aria-label="Увеличить">
          <Svg w={9} h={9}>
            <path d="M0 4.500h9M4.500 0v9" />
          </Svg>
        </button>
        <span className="ml-3">22 %</span>
        <button aria-label="Вписать страницу" className="ml-3">
          <Svg w={16} h={16}>
            <path d="M4.500 4.500h7v7h-7z" />
            <path d="M6 3l2-2 2 2M6 13l2 2 2-2M3 6L1 8l2 2M13 6l2 2-2 2" strokeWidth="1.200" />
          </Svg>
        </button>
        <button aria-label="Переключить окна" className="ml-3">
          <Svg w={15} h={15}>
            <path d="M3 9.500H.5v-9h12V3M.5 2.500h12M4 12.500v-7h10V8M4 7.500h10" />
            <path d="M7.500 9.500h6v5h-6z" fill="#fff" />
          </Svg>
        </button>
      </div>
    </footer>
  );
}

export default function App() {
  return (
    <div className="flex flex-col h-screen overflow-hidden bg-[#e6e6e6] border-x border-[#3955a3] font-['Noto_Sans',sans-serif] text-xs text-[#333]">
      <TitleBar />
      <Ribbon />
      <Workspace />
      <StatusBar />
    </div>
  );
}
